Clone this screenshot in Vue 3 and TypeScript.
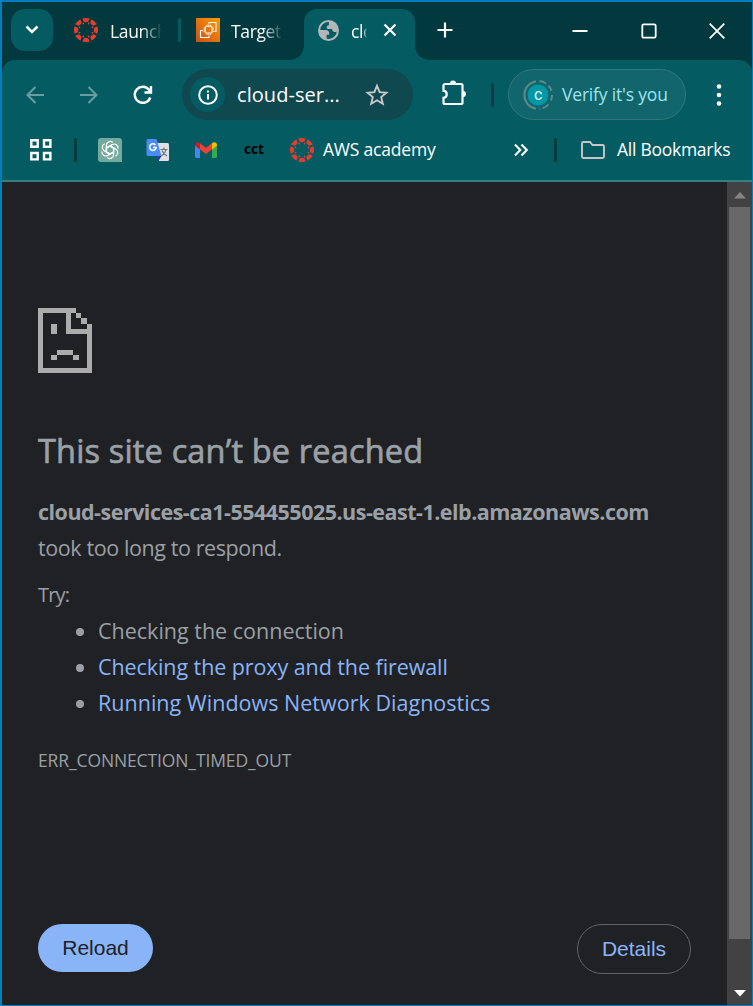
<script setup lang="ts">
const spokes = [0, 45, 90, 135, 180, 225, 270, 315]
const petals = [0, 60, 120, 180, 240, 300]
const tips = ['Checking the proxy and the firewall', 'Running Windows Network Diagnostics']
</script>

<template>
  <div class="window">
    <header class="tabs">
      <button class="search" aria-label="Search tabs">
        <svg width="14" height="10" viewBox="0 0 14 10"><path d="M1.500 1.500 7 7l5.500-5.500" fill="none" stroke="#fff" stroke-width="2.500" /></svg>
      </button>
      <div class="tab first">
        <svg class="fav" viewBox="-12 -12 24 24">
          <clipPath id="disc"><circle r="12" /></clipPath>
          <g fill="#e63c2e" clip-path="url(#disc)">
            <g v-for="a in spokes" :key="a" :transform="`rotate(${a})`"><path d="M-4.100-12.500h8.200L2.200-8.200Q0-7.300-2.200-8.200z" /><circle cx="2.700" cy="-6.500" r=".9" /></g>
          </g>
        </svg>
        <span class="title fade">Launch</span>
      </div>
      <i class="sep light"></i>
      <div class="tab second">
        <svg class="fav" viewBox="0 0 24 24">
          <defs><linearGradient id="amber" x1="0" y1="1" x2="1" y2="0"><stop stop-color="#c8511b" /><stop offset="1" stop-color="#ff9900" /></linearGradient></defs>
          <path fill="url(#amber)" d="M0 0h24v24H0z" />
          <g fill="none" stroke="#fff" stroke-width="1.100">
            <rect x="9.200" y="8.200" width="6.800" height="6.800" rx="1" />
            <path d="M11 6.500v1.500m1.700-1.500v1.500m1.700-1.500v1.500M11 15.500v1.500m1.700-1.500v1.500m1.700-1.500v1.500M7.500 10H9m-1.500 1.700H9m-1.500 1.700H9M16.500 10H18m-1.500 1.700H18m-1.500 1.700H18" stroke-width=".8" />
            <path d="M13 6V4.500h7v9h-1.500M7 12.500H4.500v7h8.500v-2" />
          </g>
        </svg>
        <span class="title fade">Target</span>
      </div>
      <div class="tab active">
        <svg class="globe" viewBox="2 2 20 20"><circle cx="12" cy="12" r="9" fill="none" stroke="#b4b7b9" stroke-width="2" /><path fill="#b4b7b9" d="M12.500 3C17.500 3 21 7 21 12c-1 1.500-2.500 1.800-3.800 1.300-1.300-.5-1.700-1.500-1.700-2.800H12c-1.200 0-1.700-.8-1.700-1.700 0-1 .8-1.800 2-1.800zM3 11.500h6.500c1.800 0 3.200 1.300 3.200 3V16h-2.500v4.500C6 20 3 16.500 3 11.500z" /></svg>
        <span class="title short">clo</span>
        <svg width="14" height="14" viewBox="0 0 14 14"><path d="m1.500 1.500 11 11m0-11-11 11" stroke="#fff" stroke-width="2.200" /></svg>
      </div>
      <svg class="plus" width="16" height="16" viewBox="0 0 16 16"><path d="M8 .5v15M.5 8h15" stroke="#fff" stroke-width="2.200" /></svg>
      <div class="controls">
        <svg width="16" height="16" viewBox="0 0 16 16"><path d="M.5 8h15" stroke="#fff" stroke-width="2" /></svg>
        <svg width="16" height="16" viewBox="0 0 16 16"><rect x="1.300" y="1.300" width="13.400" height="13.400" rx="1.500" fill="none" stroke="#fff" stroke-width="1.800" /></svg>
        <svg width="16" height="16" viewBox="0 0 16 16"><path d="m.7.7 14.600 14.600m0-14.600L.7 15.300" stroke="#fff" stroke-width="1.800" /></svg>
      </div>
    </header>

    <section class="chrome">
      <div class="toolbar">
        <svg class="nav" width="18" height="18" viewBox="0 0 18 18"><path d="M18 9H1.500M9.500 1 1.500 9l8 8" /></svg>
        <svg class="nav" width="18" height="18" viewBox="0 0 18 18"><path d="M0 9h16.500M8.500 1l8 8-8 8" /></svg>
        <svg class="reload-icon" width="20" height="20" viewBox="0 0 20 20"><path d="M17.300 12.500A8 8 0 1 1 16.200 5L18 7M18 1v6.500h-6.500" /></svg>
        <div class="omnibox">
          <span class="info"><svg width="20" height="20" viewBox="0 0 20 20"><circle cx="10" cy="10" r="8.800" fill="none" stroke="#fff" stroke-width="2" /><path d="M10 9v5.500M10 5.500v2" stroke="#fff" stroke-width="2" /></svg></span>
          <span class="url">cloud-ser...</span>
          <svg class="star" width="24" height="24" viewBox="0 0 24 24"><path d="m12 2.800 2.600 6.300 6.800.6-5.200 4.400 1.600 6.700L12 17.300l-5.800 3.500 1.600-6.700-5.200-4.400 6.800-.6z" fill="none" stroke="#c7c9ca" stroke-width="1.900" /></svg>
        </div>
        <svg class="puzzle" width="26" height="26" viewBox="0 0 26 26"><path d="M3 4h16a1.500 1.500 0 0 1 1.500 1.500v17A1.500 1.500 0 0 1 19 24H3a1.500 1.500 0 0 1-1.500-1.500v-4.700c4.300 0 4.300-7 0-7V5.500A1.500 1.500 0 0 1 3 4z" fill="none" stroke="#fff" stroke-width="2.200" /><path d="M8 3.500a3 3 0 0 1 6 0zM21 11a3 3 0 0 1 0 6z" fill="#fff" /></svg>
        <i class="sep dark t"></i>
        <div class="profile">
          <svg width="30" height="30" viewBox="-15 -15 30 30"><path d="M-2-13.800A14 14 0 0 0-2 13.800" fill="none" stroke="#5e8789" stroke-width="2" /><path d="M1.500-13.900A14 14 0 0 1 8-11.500M10.500-9.300A14 14 0 0 1 13.400-4M14 0A14 14 0 0 1 12.900 5.500M10.500 9.300A14 14 0 0 1 1.500 13.900" fill="none" stroke="#5e8789" stroke-width="2" stroke-dasharray="7 2.500" /><circle r="10.500" fill="#0097a7" /><text y="5" text-anchor="middle">c</text></svg>
          <span>Verify it's you</span>
        </div>
        <svg class="kebab" width="6" height="24" viewBox="0 0 6 24"><g fill="#fff"><circle cx="3" cy="3.500" r="2.300" /><circle cx="3" cy="12" r="2.300" /><circle cx="3" cy="20.500" r="2.300" /></g></svg>
      </div>

      <div class="bookmarks">
        <svg width="22" height="22" viewBox="0 0 22 22"><path d="M1.300 1.300h6.400v6.400H1.300zM14 1.300h6.400v6.400H14zM1.300 14h6.400v6.400H1.300zM14 14h6.400v6.400H14z" fill="none" stroke="#fff" stroke-width="2.400" /></svg>
        <i class="sep dark b1"></i>
        <svg class="gpt" width="24" height="24" viewBox="-12 -12 24 24"><path d="M-9-12H9a3 3 0 0 1 3 3V12H-9a3 3 0 0 1-3-3V-9a3 3 0 0 1 3-3z" fill="#74aa9c" /><g fill="none" stroke="#fff" stroke-width="1.200"><path v-for="a in petals" :key="a" :transform="`rotate(${a})`" d="M-3.600 2V-4.700A3.900 3.900 0 0 1 2.800-7.600M-3.600-2 0-4.100 5.200-1.100" /></g></svg>
        <svg class="translate" width="24" height="24" viewBox="0 0 24 24"><path d="M9 5h12.500a1.500 1.500 0 0 1 1.500 1.500v15a1.500 1.500 0 0 1-1.500 1.500H13z" fill="#dfe1e3" /><path d="m11 18 4.500 0-3 5z" fill="#3730b5" /><path d="M2 1h8.500l5 17H2A1.500 1.500 0 0 1 .5 16.500v-14A1.500 1.500 0 0 1 2 1z" fill="#4b8bf5" /><path d="M9.400 6.900A3.300 3.300 0 1 0 10.200 9.500H7" fill="none" stroke="#fff" stroke-width="1.600" /><path d="M14.500 11.500h7M18 9.500v2M20 11.500c-.6 3-2.500 5-4.500 6.500M16 12.500c1 2.500 3 4.500 5 5.500" fill="none" stroke="#69777c" stroke-width="1.200" /></svg>
        <svg class="gmail" width="22" height="18" viewBox="0 0 22 18"><path d="M0 4v11.500A1.500 1.500 0 0 0 1.500 17H5V7z" fill="#4285f4" /><path d="M22 4v11.500a1.500 1.500 0 0 1-1.500 1.500H17V7z" fill="#34a853" /><path d="M5 2.200 11 6.700l6-4.500V8.500L11 13 5 8.500z" fill="#ea4335" /><path d="M0 4C0 1.200 3 .2 5 2.200v6.300L0 4.800z" fill="#c5221f" /><path d="M22 4c0-2.800-3-3.800-5-1.800v6.300l5-3.700z" fill="#fbbc04" /></svg>
        <b class="cct">cct</b>
        <svg class="canvas" width="24" height="24" viewBox="-12 -12 24 24"><g fill="#e63c2e" clip-path="url(#disc)"><g v-for="a in spokes" :key="a" :transform="`rotate(${a})`"><path d="M-4.100-12.500h8.200L2.200-8.200Q0-7.300-2.200-8.200z" /><circle cx="2.700" cy="-6.500" r=".9" /></g></g></svg>
        <span class="aws">AWS academy</span>
        <svg class="more" width="16" height="14" viewBox="0 0 16 14"><path d="m2 1.500 5.300 5.500L2 12.500M8.500 1.500l5.300 5.500-5.300 5.500" fill="none" stroke="#fff" stroke-width="2.100" /></svg>
        <i class="sep dark b2"></i>
        <svg class="folder" width="24" height="18" viewBox="0 0 24 18"><path d="M2.500 1H9l2.500 3h10A1.500 1.500 0 0 1 23 5.500v10a1.500 1.500 0 0 1-1.500 1.500h-19A1.500 1.500 0 0 1 1 15.500v-13A1.500 1.500 0 0 1 2.500 1z" fill="none" stroke="#c7c7c7" stroke-width="1.900" /></svg>
        <span class="all">All Bookmarks</span>
      </div>
    </section>

    <div class="viewport">
      <main>
        <svg class="sad" width="54" height="65" viewBox="0 0 54 65" shape-rendering="crispEdges"><path fill="#acacac" d="M0 0h38v5h-5v16h16v-5h5v49H0zM5 5v55h44V26H28V5zM38 5h5v5h-5zM43 10h6v6h-6zM13 16h6v10h-6zM19 42h16v5H19zM13 47h6v5h-6zM35 47h6v5h-6z" fill-rule="evenodd" /></svg>
        <h1>This site can’t be reached</h1>
        <p class="host"><strong>cloud-services-ca1-554455025.us-east-1.elb.amazonaws.com</strong></p>
        <p class="slow">took too long to respond.</p>
        <p class="try">Try:</p>
        <ul>
          <li class="l0">Checking the connection</li>
          <li v-for="(t, i) in tips" :key="t" :class="`l${i + 1}`"><a>{{ t }}</a></li>
        </ul>
        <p class="code">ERR_CONNECTION_TIMED_OUT</p>
        <div class="actions">
          <button class="reload">Reload</button>
          <button class="details">Details</button>
        </div>
      </main>
      <aside class="scroll">
        <svg width="12" height="7" viewBox="0 0 12 7"><path d="M0 6.500 6 0l6 6.500z" fill="#858585" /></svg>
        <div class="thumb"></div>
        <svg class="down" width="12" height="7" viewBox="0 0 12 7"><path d="M0 0h12L6 6.500z" fill="#fff" /></svg>
      </aside>
    </div>
  </div>
</template>

<style>
body { margin: 0; background: #202124; }
</style>

<style scoped>
* { box-sizing: border-box; }
svg { display: block; flex: none; }
button { border: 0; padding: 0; }
.window { width: 753px; height: 1006px; border: solid #007ebd; border-width: 2px 1px 1px 2px; background: #02393e; color: #fff; font-family: "Open Sans", "Noto Sans", sans-serif; overflow: hidden; white-space: nowrap; display: flex; flex-direction: column; }
.tabs { height: 58px; flex: none; display: flex; align-items: center; padding: 0 27px 2px 9px; }
.search { width: 42px; height: 42px; border-radius: 14px; background: #045c62; display: grid; place-items: center; }
.tab { display: flex; align-items: center; }
.first { margin-left: 21px; width: 104px; }
.fav { width: 24px; height: 24px; }
.title { font-size: 17.500px; line-height: 26px; overflow: hidden; letter-spacing: -.35px; margin-top: 1px; }
.fade { margin-left: 12px; width: 52px; -webkit-mask-image: linear-gradient(90deg, #000 60%, transparent); mask-image: linear-gradient(90deg, #000 60%, transparent); }
.second .fade { margin-left: 11px; }
.sep { width: 3px; height: 24px; border-radius: 2px; flex: none; }
.light { background: #045c62; }
.dark { background: #023c41; }
.second { margin-left: 15px; width: 108px; }
.active { position: relative; width: 111px; height: 51px; align-self: flex-end; margin-bottom: -2px; border-radius: 13px 13px 0 0; background: #045c62; padding: 0 17px 9px 14px; }
.active::before, .active::after { content: ""; position: absolute; bottom: 0; width: 14px; height: 14px; }
.active::before { left: -14px; background: radial-gradient(circle at 0 0, transparent 13.500px, #045c62 14px); }
.active::after { right: -14px; background: radial-gradient(circle at 100% 0, transparent 13.500px, #045c62 14px); }
.globe { width: 21px; height: 21px; }
.short { margin-left: 12px; width: 16px; margin-right: 16px; -webkit-mask-image: linear-gradient(90deg, #000 75%, transparent); mask-image: linear-gradient(90deg, #000 75%, transparent); }
.plus { margin-left: 22px; }
.controls { margin-left: auto; display: flex; gap: 52.500px; padding-top: 2px; }
.chrome { height: 122px; flex: none; background: #045c62; border-radius: 13px 13px 0 0; border-bottom: 2px solid #397c81; }
.toolbar { height: 69px; display: flex; align-items: center; padding-left: 24px; }
.nav { fill: none; stroke: #6b9c9f; stroke-width: 2; margin-right: 36px; }
.nav + .nav { margin-right: 35px; }
.reload-icon { fill: none; stroke: #fff; stroke-width: 2.400; }
.omnibox { width: 231px; height: 51px; margin-left: 29px; border-radius: 26px; background: #0f484f; display: flex; align-items: center; padding-left: 8px; }
.info { width: 35px; height: 35px; border-radius: 50%; background: #045c62; display: grid; place-items: center; }
.url { margin-left: 12px; width: 103px; font-size: 20px; letter-spacing: .05px; }
.star { margin-left: 25px; }
.puzzle { margin-left: 29px; margin-top: -3px; }
.t { margin-left: 23px; }
.profile { margin-left: 14px; width: 178px; height: 51px; border-radius: 26px; border: 1px solid #32777c; background: #11666c; display: flex; align-items: center; padding-left: 14px; color: #9de3ef; font-size: 17.500px; letter-spacing: -.18px; }
.profile text { fill: #e4f7f8; font: 16px Roboto, sans-serif; }
.profile span { margin-left: 9px; margin-top: -1px; }
.kebab { margin-left: 30px; }
.bookmarks { height: 42px; display: flex; align-items: center; padding-left: 28px; font-size: 17.500px; }
.b1 { margin-left: 22px; }
.gpt { margin-left: 21px; }
.translate { margin-left: 24px; }
.gmail { margin-left: 25px; }
.cct { margin-left: 27px; width: 20px; color: #000; font-size: 13.500px; line-height: 20px; margin-top: -2px; }
.canvas { margin-left: 26px; }
.aws { margin-left: 9px; width: 113px; letter-spacing: -.2px; margin-top: -2px; }
.more { margin-left: 77px; }
.b2 { margin-left: 25px; }
.folder { margin-left: 24px; }
.all { margin-left: 12px; letter-spacing: -.26px; margin-top: -2px; }
.viewport { flex: 1; display: flex; background: #202124; min-height: 0; }
main { width: 725px; padding: 126px 36px 0; color: #9aa0a6; font-size: 21.500px; display: flex; flex-direction: column; }
h1 { margin: 58px 0 0; font-size: 32.500px; line-height: 39px; font-weight: 400; letter-spacing: .17px; -webkit-text-stroke: .7px #9aa0a6; }
p { margin: 0; line-height: 36px; }
.host { margin-top: 24px; letter-spacing: -.51px; }
.slow { letter-spacing: -.4px; }
.try { margin-top: 11px; font-size: 20px; letter-spacing: -.8px; }
ul { margin: 0; padding: 0 0 0 60px; line-height: 36px; }
.l1 { letter-spacing: -.08px; }
.l2 { letter-spacing: .02px; }
a { color: #8ab4f8; }
.code { margin-top: 21px; font-size: 17.500px; letter-spacing: -.12px; }
.actions { margin-top: 146px; display: flex; justify-content: space-between; }
.actions button { font: 21px "Liberation Sans", Arial, sans-serif; border-radius: 25px; }
.reload { width: 115px; height: 48px; background: #8ab4f8; color: #202124; }
.details { width: 114px; height: 50px; background: transparent; color: #8ab4f8; border: 1px solid #5f6368 !important; }
.scroll { width: 25px; background: #424242; display: flex; flex-direction: column; align-items: center; padding: 10px 0 8px; }
.thumb { width: 21px; height: 732px; margin-top: 8px; background: #686868; }
.down { margin-top: auto; }
</style>
